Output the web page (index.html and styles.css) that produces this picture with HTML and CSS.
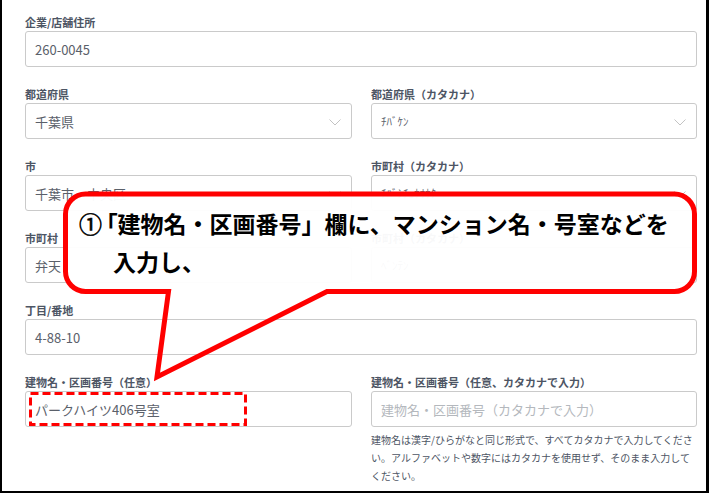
FILE: index.html
```html
<!DOCTYPE html>
<html lang="ja">
<head>
<meta charset="utf-8">
<link rel="stylesheet" href="styles.css">
</head>
<body>
<div class="frame">
  <div class="form">
    <div class="field full">
      <label class="label">企業/店舗住所</label>
      <div class="input">260-0045</div>
    </div>

    <div class="field">
      <label class="label">都道府県</label>
      <div class="input select">千葉県<svg class="chev" viewBox="0 0 12 7"><path d="M0.5 0.5 L6 6 L11.5 0.5"/></svg></div>
    </div>
    <div class="field">
      <label class="label">都道府県（カタカナ）</label>
      <div class="input select kana">ﾁﾊﾞｹﾝ<svg class="chev" viewBox="0 0 12 7"><path d="M0.5 0.5 L6 6 L11.5 0.5"/></svg></div>
    </div>

    <div class="field">
      <label class="label">市</label>
      <div class="input select">千葉市　中央区<svg class="chev" viewBox="0 0 12 7"><path d="M0.5 0.5 L6 6 L11.5 0.5"/></svg></div>
    </div>
    <div class="field">
      <label class="label">市町村（カタカナ）</label>
      <div class="input select kana">ﾁﾊﾞｼﾁｭｳｵｳｸ<svg class="chev" viewBox="0 0 12 7"><path d="M0.5 0.5 L6 6 L11.5 0.5"/></svg></div>
    </div>

    <div class="field">
      <label class="label">市町村</label>
      <div class="input">弁天</div>
    </div>
    <div class="field">
      <label class="label">市町村（カタカナ）</label>
      <div class="input kana">ﾍﾞﾝﾃﾝ</div>
    </div>

    <div class="field full">
      <label class="label">丁目/番地</label>
      <div class="input">4-88-10</div>
    </div>

    <div class="field">
      <label class="label">建物名・区画番号（任意）</label>
      <div class="input">パークハイツ406号室</div>
    </div>
    <div class="field">
      <label class="label">建物名・区画番号（任意、カタカナで入力）</label>
      <div class="input placeholder">建物名・区画番号（カタカナで入力）</div>
      <p class="help">建物名は漢字/ひらがなと同じ形式で、すべてカタカナで入力してください。アルファベットや数字にはカタカナを使用せず、そのまま入力してください。</p>
    </div>
  </div>
</div>

<svg class="overlay" width="709" height="493" viewBox="0 0 709 493">
  <rect class="bubble-fill" x="65.5" y="194" width="629" height="97.5" rx="20" ry="20"/>
  <path class="bubble-line" d="M 327 291.5 L 674.5 291.5 A 20 20 0 0 0 694.5 271.5 L 694.5 214 A 20 20 0 0 0 674.5 194 L 85.5 194 A 20 20 0 0 0 65.5 214 L 65.5 271.5 A 20 20 0 0 0 85.5 291.5 L 168.5 291.5 L 157 377 Z"/>
  <rect class="dash" x="30.5" y="393.5" width="215" height="31"/>
</svg>

<div class="callout">
  <div class="callout-line"><span class="num">①</span><span class="open">「</span>建物名・区画番号」欄に、マンション名・号室などを</div>
  <div class="callout-line indent">入力し、</div>
</div>
</body>
</html>
```

FILE: styles.css
```css
html, body {
  margin: 0;
  padding: 0;
  background: #fff;
}

body {
  position: relative;
  width: 709px;
  height: 493px;
  overflow: hidden;
  font-family: "Noto Sans CJK JP", "Noto Sans", sans-serif;
}

.frame {
  box-sizing: border-box;
  width: 709px;
  height: 493px;
  border-left: 2px solid #000;
  border-right: 3px solid #000;
  border-bottom: 2px solid #000;
  padding: 15px 9px 0 23px;
}

.form {
  display: grid;
  grid-template-columns: 327px 326px;
  column-gap: 19px;
  row-gap: 20px;
}

.field {
  display: flex;
  flex-direction: column;
}

.field.full {
  grid-column: 1 / span 2;
}

.label {
  display: block;
  font-size: 11px;
  line-height: 14px;
  font-weight: 700;
  color: #4d5564;
  margin-bottom: 2px;
  white-space: nowrap;
}

.input {
  box-sizing: border-box;
  height: 36px;
  border: 1px solid #cacaca;
  border-radius: 3px;
  padding: 0 9px;
  display: flex;
  align-items: center;
  font-size: 13px;
  color: #5a606a;
  position: relative;
  white-space: nowrap;
}

.input.kana {
  font-size: 11px;
}

.input.placeholder {
  color: #b4b8bd;
}

.select .chev {
  position: absolute;
  right: 10px;
  top: 15px;
  width: 12px;
  height: 7px;
}

.chev path {
  fill: none;
  stroke: #c3c3c3;
  stroke-width: 1;
}

.help {
  margin: 4px 0 0;
  font-size: 10px;
  line-height: 18px;
  color: #4d5564;
}

.overlay {
  position: absolute;
  left: 0;
  top: 0;
}

.bubble-fill {
  fill: rgba(255, 255, 255, 0.96);
}

.bubble-line {
  fill: none;
  stroke: #ff0000;
  stroke-width: 5;
  stroke-linejoin: miter;
}

.dash {
  fill: none;
  stroke: #ff0000;
  stroke-width: 3;
  stroke-dasharray: 8 4;
}

.callout {
  position: absolute;
  left: 79px;
  top: 204px;
  width: 610px;
  font-size: 23px;
  line-height: 38px;
  font-weight: 700;
  color: #000;
  white-space: nowrap;
}

.callout-line.indent {
  padding-left: 34px;
}

.num {
  display: inline-block;
  width: 23px;
  font-weight: 400;
  -webkit-text-stroke: 0.6px #000;
}

.open {
  display: inline-block;
  margin-left: 4px;
  font-feature-settings: "palt" 1;
}
```
